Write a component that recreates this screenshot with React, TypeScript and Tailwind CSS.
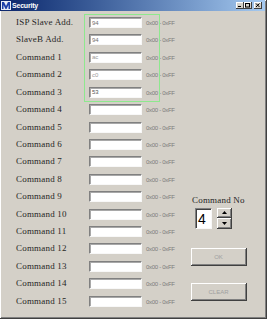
import React from "react";

const rows: { label: string; value: string; color: string }[] = [
  { label: "ISP Slave Add.", value: "94", color: "#707070" },
  { label: "SlaveB Add.", value: "94", color: "#707070" },
  { label: "Command 1", value: "ac", color: "#9a9a9a" },
  { label: "Command 2", value: "c0", color: "#9a9a9a" },
  { label: "Command 3", value: "53", color: "#555555" },
  ...Array.from({ length: 12 }, (_, i) => ({ label: `Command ${i + 4}`, value: "", color: "#555" })),
];

function TitleIcon() {
  return (
    <svg width="10" height="9" viewBox="0 0 10 9" className="shrink-0">
      <rect x="0" y="0" width="10" height="9" fill="#e8ecf4" />
      <path d="M1 8 L1 1 L3 1 L5 5 L7 1 L9 1 L9 8 L7.5 8 L7.5 4 L5.5 8 L4.5 8 L2.5 4 L2.5 8 Z" fill="#1c3fa8" />
    </svg>
  );
}

function CapBtn({ kind }: { kind: "min" | "max" | "close" }) {
  return (
    <div className="w-[8px] h-[7px] bg-[#d4d0c8] border-r border-b border-[#404040] shadow-[inset_1px_1px_0_#ffffff] flex items-center justify-center">
      <svg width="6" height="5" viewBox="0 0 6 5">
        {kind === "min" && <rect x="1" y="3" width="3" height="1" fill="#000" />}
        {kind === "max" && <rect x="0.5" y="0.5" width="4" height="3.5" fill="none" stroke="#000" strokeWidth="1" />}
        {kind === "close" && <path d="M1 0.5 L4.5 4 M4.5 0.5 L1 4" stroke="#000" strokeWidth="1" />}
      </svg>
    </div>
  );
}

export default function App() {
  const serif = { fontFamily: '"Liberation Serif", "Times New Roman", serif' };
  const sans = { fontFamily: '"Liberation Sans", Arial, sans-serif' };
  return (
    <div className="w-[279px] h-[320px] bg-white">
      <div className="relative w-[267px] h-[319px] bg-[#d4d0c8] border-r border-b border-[#404040] shadow-[inset_1px_1px_0_#ffffff,inset_-1px_-1px_0_#808080] flex flex-col">
        {/* title bar */}
        <div className="h-[11px] w-[265px] flex items-center bg-gradient-to-r from-[#0a246a] to-[#a6caf0] pl-[1px]">
          <TitleIcon />
          <span className="ml-[1px] text-white font-bold text-[7px] leading-[11px] tracking-[-0.2px]" style={sans}>
            Security
          </span>
          <div className="ml-auto flex items-center mr-[3px]">
            <CapBtn kind="min" />
            <CapBtn kind="max" />
            <div className="w-[2px]" />
            <CapBtn kind="close" />
          </div>
        </div>

        {/* body */}
        <div className="flex flex-row">
          <div className="w-[191px] pl-[16px] pt-[6px] flex flex-col gap-[6.43px]">
            {rows.map((r) => (
              <div key={r.label} className="h-[11px] flex items-center">
                <span className="w-[73px] text-[9px] leading-[11px] tracking-[0.2px] text-[#262626] whitespace-nowrap" style={serif}>
                  {r.label}
                </span>
                <div className="w-[53px] h-[11px] bg-white border-t border-l border-[#808080] border-b border-r border-b-[#f8f8f8] border-r-[#f8f8f8] shadow-[inset_1px_1px_0_#a8a8a8] flex items-center pl-[2px]">
                  <span className="text-[6px] leading-[8px]" style={{ ...sans, color: r.color }}>
                    {r.value}
                  </span>
                </div>
                <span className="ml-[4px] mt-[1px] text-[6px] leading-[8px] tracking-[-0.3px] text-[#7c7c7c] whitespace-nowrap" style={sans}>
                  0x00 - 0xFF
                </span>
              </div>
            ))}
          </div>

          <div className="pt-[184px] flex flex-col">
            <span className="text-[9px] leading-[11px] tracking-[0.2px] text-[#262626] whitespace-nowrap ml-[1px]" style={serif}>
              Command No
            </span>
            <div className="mt-[2px] ml-[4px] flex flex-row">
              <div className="w-[17px] h-[21px] bg-white border-t border-l border-[#808080] border-b border-r border-b-[#f8f8f8] border-r-[#f8f8f8] shadow-[inset_1px_1px_0_#404040] flex items-center pl-[2px]">
                <span className="text-[14px] leading-[16px] text-black" style={sans}>4</span>
              </div>
              <div className="ml-[5px] flex flex-col">
                <div className="w-[15px] h-[10px] bg-[#d4d0c8] border-r border-b border-[#404040] shadow-[inset_1px_1px_0_#ffffff,inset_-1px_-1px_0_#808080] flex items-center justify-center">
                  <svg width="5" height="3" viewBox="0 0 5 3"><path d="M2.5 0 L5 3 L0 3 Z" fill="#000" /></svg>
                </div>
                <div className="w-[15px] h-[11px] bg-[#d4d0c8] border-r border-b border-[#404040] shadow-[inset_1px_1px_0_#ffffff,inset_-1px_-1px_0_#808080] flex items-center justify-center">
                  <svg width="5" height="3" viewBox="0 0 5 3"><path d="M0 0 L5 0 L2.5 3 Z" fill="#000" /></svg>
                </div>
              </div>
            </div>
            <div className="mt-[19px] w-[56px] h-[18px] bg-[#d4d0c8] border-r border-b border-[#404040] shadow-[inset_1px_1px_0_#ffffff,inset_-1px_-1px_0_#808080] flex items-center justify-center">
              <span className="text-[6px] leading-[8px] text-[#a0a0a0]" style={sans}>OK</span>
            </div>
            <div className="mt-[17px] w-[56px] h-[18px] bg-[#d4d0c8] border-r border-b border-[#404040] shadow-[inset_1px_1px_0_#ffffff,inset_-1px_-1px_0_#808080] flex items-center justify-center">
              <span className="text-[6px] leading-[8px] text-[#a0a0a0]" style={sans}>CLEAR</span>
            </div>
          </div>
        </div>

        {/* focus frame overlay */}
        <div className="absolute left-[84px] top-[14px] w-[76px] h-[88px] border border-[#8ee88e] pointer-events-none" />
      </div>
    </div>
  );
}
